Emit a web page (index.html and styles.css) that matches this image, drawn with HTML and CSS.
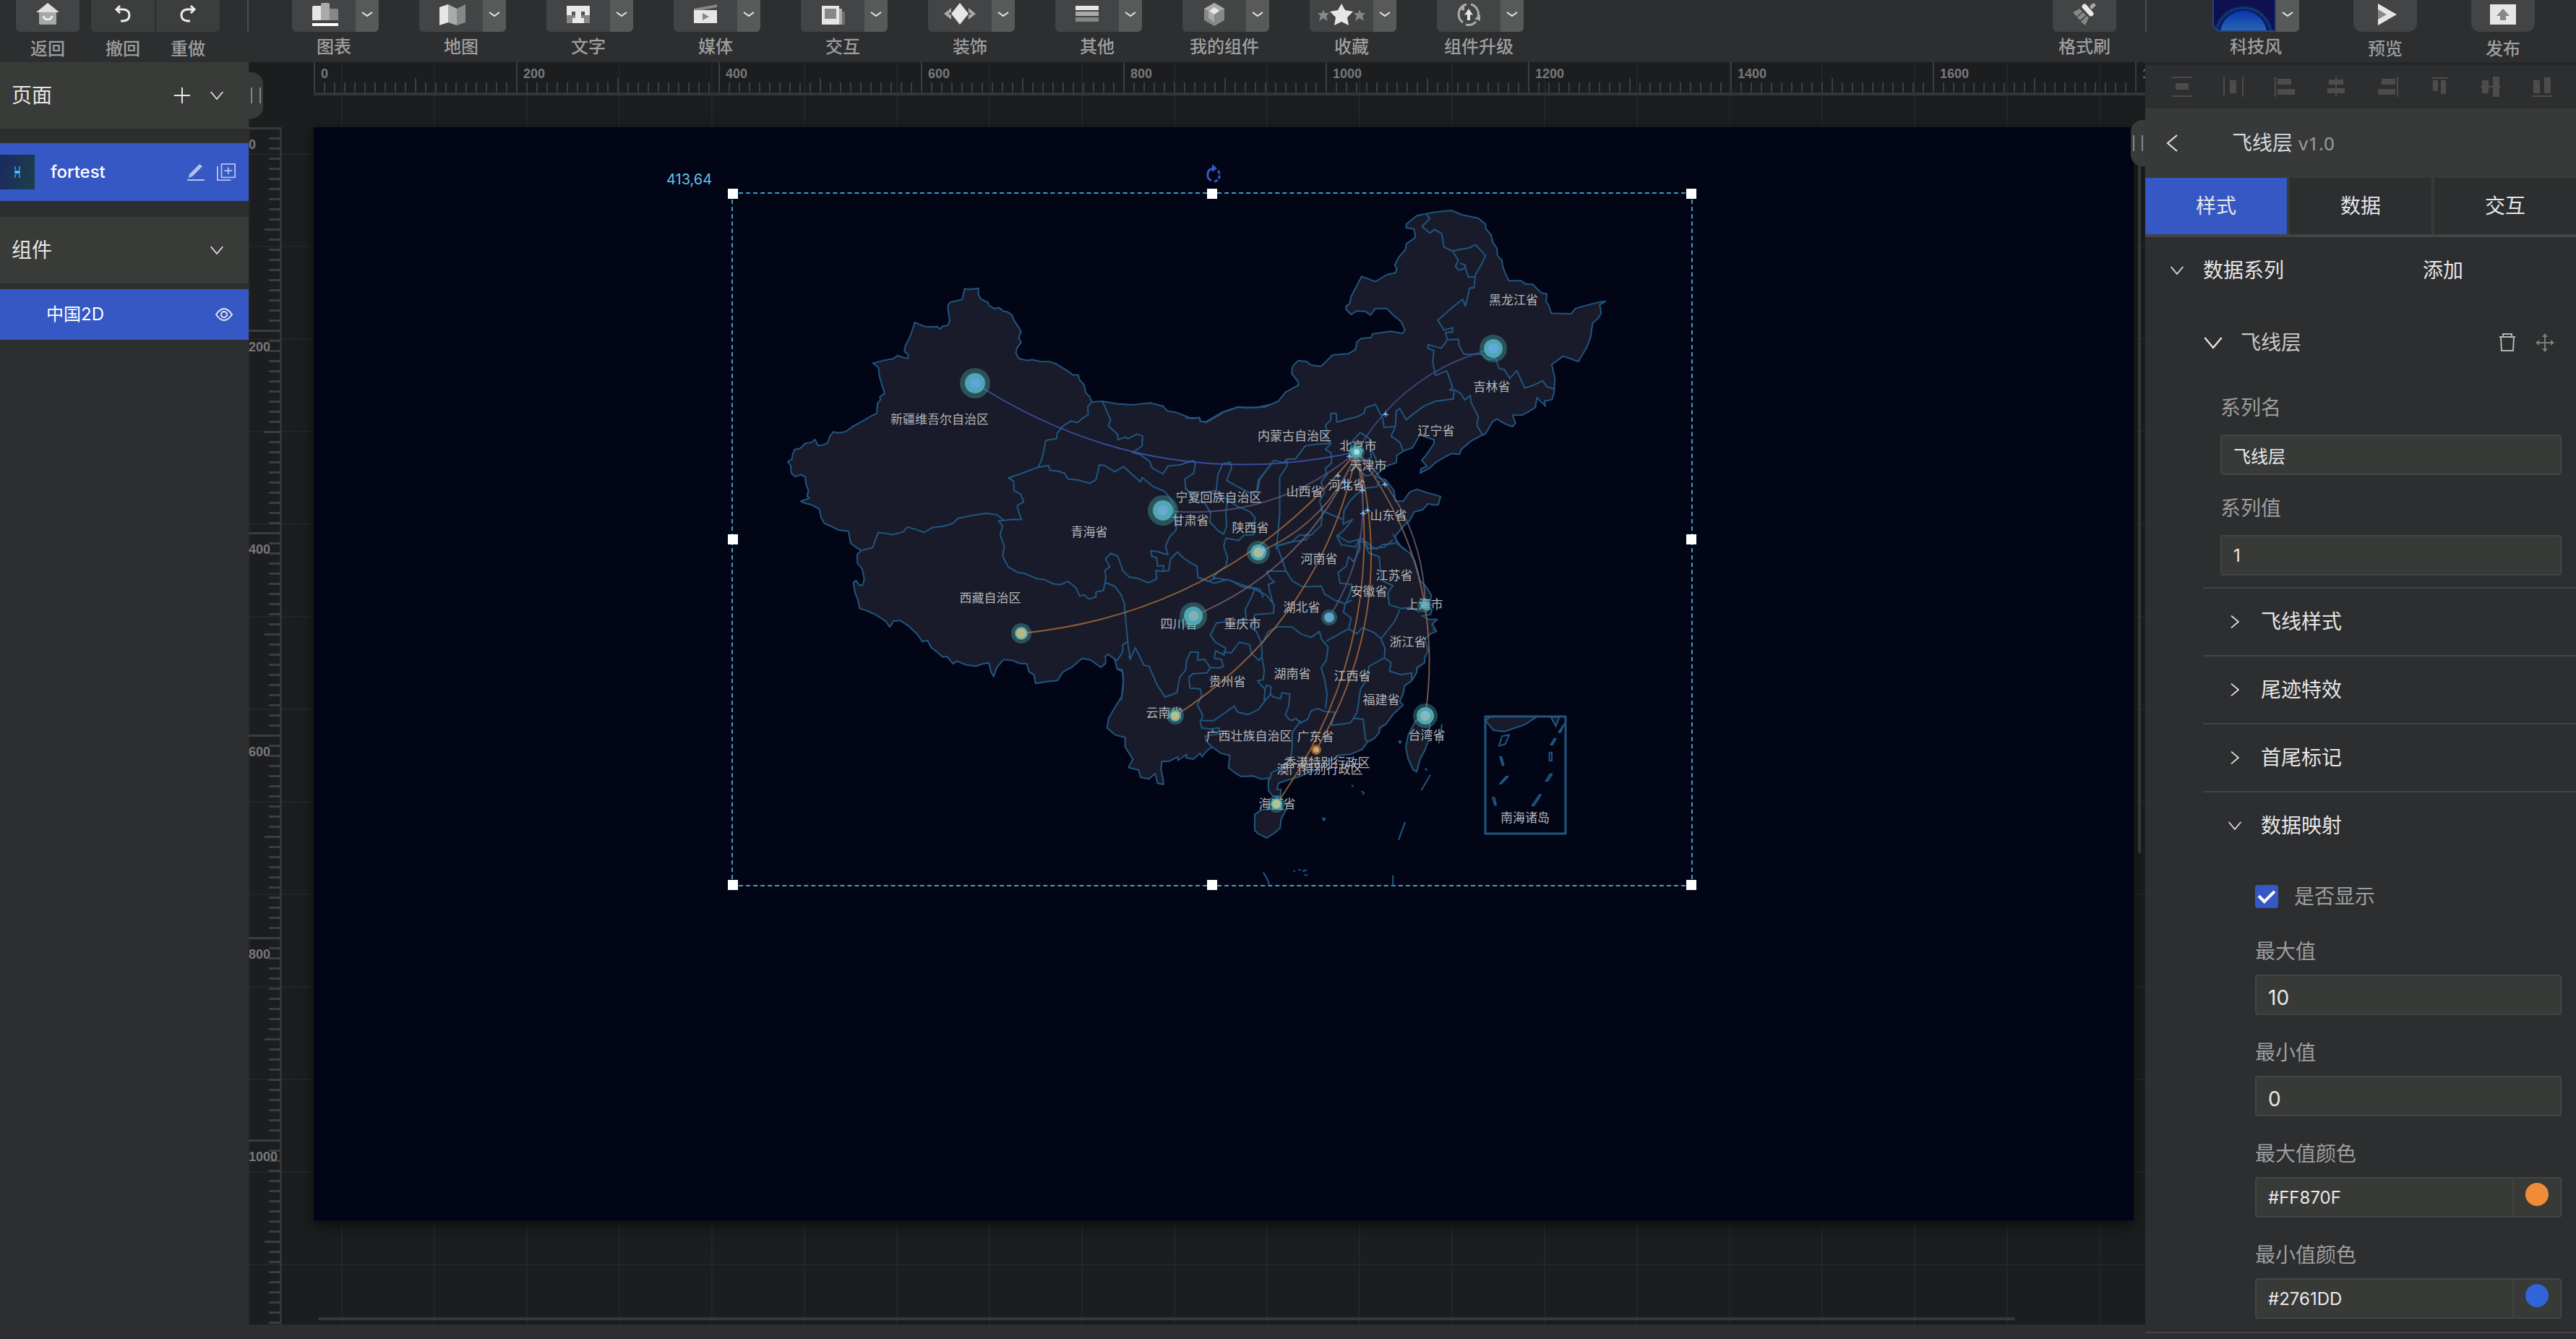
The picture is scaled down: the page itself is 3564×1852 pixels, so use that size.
FILE: index.html
```html
<!DOCTYPE html>
<html lang="zh-CN">
<head>
<meta charset="utf-8">
<title>fortest</title>
<link rel="stylesheet" href="styles.css">
</head>
<body>
<svg class="defs" aria-hidden="true">
  <symbol id="down" viewBox="0 0 24 24"><path d="M2 6L12 18L22 6"/></symbol>
  <symbol id="caret" viewBox="0 0 16 8"><path d="M1 1L8 6L15 1"/></symbol>
  <symbol id="right" viewBox="0 0 24 24"><path d="M6 2L18 12L6 22"/></symbol>
  <symbol id="plane" viewBox="-6 -6 12 12"><path d="M0-5L1-1L5 2V3L1 2L.5 4L2 5H-2L-.5 4L-1 2L-5 3V2L-1-1Z"/></symbol>
</svg>
<div class="app">
  <header class="toolbar">
    <div class="tool plain"><button class="btn" aria-label="返回"><svg viewBox="0 0 88 44"><path fill="#dedede" d="M44 4L60 17H28Z"/><path fill="#a6a7a7" d="M32 17H56V32Q56 34 54 34H34Q32 34 32 32Z"/><path class="ln" d="M38 22Q39 27 44 27T50 22"/></svg></button><span>返回</span></div>
    <div class="pair">
      <div class="tool plain"><button class="btn dim first" aria-label="撤回"><svg viewBox="0 0 88 44"><path class="ln" d="M35 13H45Q53 14 53 21T45 29H41M40 8L35 13L40 18"/></svg></button><span>撤回</span></div>
      <div class="tool plain"><button class="btn dim last" aria-label="重做"><svg viewBox="0 0 88 44"><path class="ln" d="M53 13H43Q35 14 35 21T43 29H47M48 8L53 13L48 18"/></svg></button><span>重做</span></div>
    </div>
    <i class="sep"></i>
    <div class="tools">
      <div class="tool"><div class="split"><button class="btn" aria-label="图表"><svg viewBox="0 0 88 44"><path fill="#868787" d="M52 12H62Q64 12 64 14V28H52Z"/><path fill="#a9aaaa" d="M40 6Q40 4 42 4H50Q52 4 52 6V28H40Z"/><path fill="#e6e6e6" d="M28 10Q28 8 30 8H40V28H28Z"/><path fill="#fff" d="M28 32H64V36H28Z"/></svg></button><button class="more" aria-label="更多图表"><svg><use href="#caret"/></svg></button></div><span>图表</span></div>
      <div class="tool"><div class="split"><button class="btn" aria-label="地图"><svg viewBox="0 0 88 44"><path fill="#e6e6e6" d="M28 10L40 6V31L28 35Z"/><path fill="#a9aaaa" d="M40 6L52 12V35L40 31Z"/><path fill="#868787" d="M52 12L64 6V31L52 35Z"/></svg></button><button class="more" aria-label="更多地图"><svg><use href="#caret"/></svg></button></div><span>地图</span></div>
      <div class="tool"><div class="split"><button class="btn" aria-label="文字"><svg viewBox="0 0 88 44"><path fill="#868787" d="M28 20H60V32H28Z"/><path fill="#e9e9e9" d="M28 8H60V21H28Z"/><path fill="#555657" d="M35 16H53V21H35Z"/><path fill="#e9e9e9" d="M40 14H48V25H52V32H36V25H40Z"/></svg></button><button class="more" aria-label="更多文字"><svg><use href="#caret"/></svg></button></div><span>文字</span></div>
      <div class="tool"><div class="split"><button class="btn" aria-label="媒体"><svg viewBox="0 0 88 44"><path fill="#868787" d="M28 12L60 6V10L34 15H28Z"/><path fill="#e6e6e6" d="M28 14H60V32H28Z"/><path fill="#868787" d="M40 18L49 23L40 28Z"/></svg></button><button class="more" aria-label="更多媒体"><svg><use href="#caret"/></svg></button></div><span>媒体</span></div>
      <div class="tool"><div class="split"><button class="btn" aria-label="交互"><svg viewBox="0 0 88 44"><path fill="#6d6e6f" d="M34 16H61V34H34Z"/><path fill="#a9aaaa" d="M32 12H57V34H32Z"/><path fill="#e6e6e6" d="M29 8H53V34H29Z"/><path fill="#868787" d="M33 12H49V26H33Z"/></svg></button><button class="more" aria-label="更多交互"><svg><use href="#caret"/></svg></button></div><span>交互</span></div>
      <div class="tool"><div class="split"><button class="btn" aria-label="装饰"><svg viewBox="0 0 88 44"><path fill="#a9aaaa" d="M32 11V17L28 19L32 21V27L22 19ZM56 11V17L60 19L56 21V27L66 19Z"/><path fill="#e6e6e6" d="M44 4L56 19L44 34L32 19Z"/></svg></button><button class="more" aria-label="更多装饰"><svg><use href="#caret"/></svg></button></div><span>装饰</span></div>
      <div class="tool"><div class="split"><button class="btn" aria-label="其他"><svg viewBox="0 0 88 44"><path fill="#e6e6e6" d="M28 8H60V14H28Z"/><path fill="#a9aaaa" d="M28 16H60V22H28Z"/><path fill="#868787" d="M28 24H60V30H28Z"/></svg></button><button class="more" aria-label="更多其他"><svg><use href="#caret"/></svg></button></div><span>其他</span></div>
      <div class="tool"><div class="split"><button class="btn" aria-label="我的组件"><svg viewBox="0 0 88 44"><path fill="#868787" d="M30 12L44 4L58 12V28L44 36L30 28Z"/><path fill="#a9aaaa" d="M30 12L44 4L58 12L52 15V25L44 31L36 25V15Z"/><path fill="#868787" d="M44 20L52 15V25L44 31Z"/><path fill="#e6e6e6" d="M44 10L51 15L44 20L37 15Z"/></svg></button><button class="more" aria-label="更多我的组件"><svg><use href="#caret"/></svg></button></div><span>我的组件</span></div>
      <div class="tool"><div class="split"><button class="btn" aria-label="收藏"><svg viewBox="0 0 88 44"><path fill="#868787" d="M19 13L21 18H27L23 22L25 29L19 25L13 29L15 22L11 18H17ZM69 13L71 18H77L73 22L75 29L69 25L63 29L65 22L61 18H67Z"/><path fill="#e6e6e6" d="M44 5L49 14L60 16L52 24L54 35L44 30L34 35L36 24L28 16L39 14Z"/></svg></button><button class="more" aria-label="更多收藏"><svg><use href="#caret"/></svg></button></div><span>收藏</span></div>
      <div class="tool"><div class="split"><button class="btn" aria-label="组件升级"><svg viewBox="0 0 88 44"><g fill="none" stroke="#a9aaaa" stroke-width="3"><path d="M36 31A14 14 0 0 1 41 6M47 6A14 14 0 0 1 57 23M54 30A14 14 0 0 1 40 34"/></g><path fill="#a9aaaa" d="M60 20V29L52 26ZM30 12L38 8V15Z"/><path fill="#e6e6e6" d="M44 12L50 21L46 20V28H42V20L38 21Z"/></svg></button><button class="more" aria-label="更多组件升级"><svg><use href="#caret"/></svg></button></div><span>组件升级</span></div>
    </div>
    <div class="tool brush"><button class="btn" aria-label="格式刷"><svg viewBox="0 0 88 44"><path fill="#868787" d="M28 17L37 12L41 16L33 23ZM34 24L42 17L46 21L38 28ZM39 30L47 22L50 24L45 35Z"/><path fill="#a9aaaa" d="M51 9L56 4L60 7L54 13Z"/><path stroke="#e9e9e9" stroke-width="7" stroke-linecap="round" d="M44 9L53 19"/></svg></button><span>格式刷</span></div>
    <div class="finish">
      <div class="tool theme"><div class="split"><button class="btn" aria-label="科技风"><svg viewBox="0 0 88 44"><defs><linearGradient id="glow" x2="0" y2="1"><stop stop-color="#0a35b4"/><stop offset=".45" stop-color="#2a6aae"/></linearGradient></defs><circle cx="43" cy="50" r="41" fill="#0c2560"/><circle cx="43" cy="50" r="38" fill="#0b1f66" stroke="#134078" stroke-width="2"/><circle cx="43" cy="48" r="32" fill="url(#glow)"/></svg></button><button class="more" aria-label="更多风格"><svg><use href="#caret"/></svg></button></div><span>科技风</span></div>
      <div class="tool plain"><button class="btn round" aria-label="预览"><svg viewBox="0 0 88 44"><path fill="#e6e6e6" d="M34 5L60 20L34 35Z"/><path fill="#868787" d="M34 13L46 20L34 27Z"/></svg></button><span>预览</span></div>
      <div class="tool plain"><button class="btn round" aria-label="发布"><svg viewBox="0 0 88 44"><path fill="#e6e6e6" d="M26 6H62V34H26Z"/><path fill="#868787" d="M44 12L53 22H48V28H40V22H35Z"/></svg></button><span>发布</span></div>
    </div>
  </header>

  <aside class="left">
    <div class="lhead"><b>页面</b><button aria-label="新增页面"><svg viewBox="0 0 24 24"><path d="M1 12H23M12 1V23"/></svg></button><button aria-label="折叠页面"><svg class="chev"><use href="#down"/></svg></button></div>
    <div class="page">
      <span class="thumb"><svg viewBox="0 0 48 48"><path d="M21 16V21L24 24L27 21V16M21 32V27L24 25L27 27V32" fill="none" stroke="#2e7fe0" stroke-width="2"/><path d="M20 24H28" stroke="#4ce0e6" stroke-width="2"/></svg></span>
      <span>fortest</span>
      <button aria-label="重命名"><svg viewBox="0 0 26 26"><path class="soft" d="M4 16L18 2L22 5L8 19L3 21ZM1 23H25V25H1Z"/></svg></button>
      <button aria-label="复制页面"><svg viewBox="0 0 28 26"><path class="softln" d="M7 1H27V21H7ZM17 6V16M11 11H23M1 4V25H21"/></svg></button>
    </div>
    <div class="lhead second"><b>组件</b><button aria-label="折叠组件"><svg class="chev"><use href="#down"/></svg></button></div>
    <div class="layer"><span>中国2D</span><button aria-label="显示"><svg viewBox="0 0 26 20"><path d="M2 10Q13-6 24 10Q13 26 2 10Z"/><circle cx="13" cy="10" r="4"/></svg></button></div>
  </aside>

  <main class="stage">
    <div class="hruler"><span>0</span><span>200</span><span>400</span><span>600</span><span>800</span><span>1000</span><span>1200</span><span>1400</span><span>1600</span><span>1800</span></div>
    <div class="vruler"><span>0</span><span>200</span><span>400</span><span>600</span><span>800</span><span>1000</span></div>
    <div class="board">
      <div class="coord">413,64</div>
      <svg class="rotate" viewBox="0 0 24 26"><path d="M12 6A9 9 0 0 0 10 23" fill="none" stroke-width="3"/><path d="M14 24A9 9 0 0 0 19 9" fill="none" stroke-width="3" stroke-dasharray="5 2"/><path class="tip" d="M11 0L18 6L11 11Z"/></svg>
      <div class="selection">
        <svg class="map" viewBox="1012 266 1330 960">
          <g class="land">
            <path transform="translate(1060 360) scale(.4464 .3954)" d="M1568 503L1520 515L1462 514L1420 530L1365 567L1345 563L1343 550L1320 554L1270 532L1243 527L1230 510L1190 499L1135 506L1088 502L1042 493L1009 496L1003 478L990 462L985 435L971 418L967 401L950 401L935 388L900 363L880 355L850 354L825 348L808 350L783 344L774 325L778 305L790 288L783 270L790 250L783 235L768 210L762 192L747 180L735 178L722 166L707 169L690 158L688 148L665 135L658 120L658 98L636 101L615 100L611 120L608 137L585 143L570 147L563 160L566 190L569 210L563 228L548 230L538 240L530 232L497 233L480 227L461 217L445 270L432 298L428 318L440 330L440 343L425 340L407 333L395 344L365 350L331 360L348 375L352 410L360 440L367 465L352 478L355 487L345 500L343 535L325 545L300 562L270 580L245 600L225 604L208 600L198 615L190 640L175 646L160 648L152 627L140 637L122 640L105 658L88 662L82 680L80 695L67 705L76 718L78 745L90 757L105 750L121 757L124 785L131 805L127 825L134 832L107 843L120 850L140 855L165 870L170 900L180 920L200 930L225 944L255 948L262 990L280 1005L295 1015L282 1030L283 1060L298 1080L304 1115L300 1135L290 1138L278 1120L270 1128L276 1165L285 1190L290 1218L310 1225L340 1240L370 1262L383 1283L395 1262L415 1260L440 1278L470 1310L484 1334L500 1330L512 1355L530 1370L547 1388L560 1386L580 1412L590 1402L620 1415L650 1420L670 1412L690 1408L697 1440L705 1456L715 1425L735 1397L765 1400L785 1410L808 1412L815 1440L830 1450L835 1480L870 1474L903 1470L920 1440L945 1425L980 1392L1005 1398L1037 1424L1052 1410L1052 1385L1060 1378L1080 1395L1088 1430L1105 1440L1107 1490L1100 1540L1081 1568H1568Z"/>
            <path transform="translate(1640 260) scale(.3954 .3333)" d="M0 955L50 953L53 968L72 970L130 930L185 908L210 913L280 908L325 885L350 848L395 818L395 805L372 770L375 740L395 716L425 720L440 735L475 740L515 693L570 688L595 670L600 640L615 625L650 620L655 605L720 595L760 604L768 590L755 555L725 525L705 500L665 500L648 527L630 512L600 510L580 525L563 505L562 490L575 480L580 450L617 367L665 388L705 360L735 352L740 335L733 320L745 290L770 255L773 232L805 205L800 170L773 165L773 150L810 115L875 100L930 93L970 112L1025 125L1050 150L1052 170L1070 195L1090 250L1092 280L1108 300L1120 355L1132 385L1175 385L1215 400L1245 435L1265 440L1262 470L1280 520L1350 522L1365 500L1400 488L1450 473L1470 470L1450 485L1455 520L1445 540L1425 560L1418 620L1405 660L1375 720L1322 698L1282 733L1293 790L1290 850L1283 878L1255 885L1230 870L1225 910L1205 925L1180 942L1145 943L1155 975L1145 990L1120 980L1090 958L1075 970L1050 1020L1035 1028L1000 1050L965 1085L960 1105L930 1102L880 1135L855 1162L822 1183L825 1165L845 1155L827 1130L845 1105L870 1060L870 1045L820 1025L795 1078L765 1090L740 1110L738 1140L700 1155L665 1195L680 1205L700 1210L730 1255L735 1300L762 1300L785 1262L810 1250L840 1262L893 1280L885 1315L865 1315L850 1310L830 1335L800 1345L785 1380L765 1400L735 1445L740 1475L770 1500H0Z"/>
            <path transform="translate(1500 740) scale(.4719 .3333)" d="M895 -15L915 20L930 50L955 75L970 110L978 150L985 190L1000 210L1018 250L1015 270L985 280L1020 310L1015 330L990 335L1010 350L1035 350L1020 370L1033 400L1015 410L1000 430L1008 480L998 530L975 570L960 605L940 625L935 660L925 690L930 710L905 745L885 785L865 820L850 845L830 860L815 890L780 910L740 925L700 945L660 985L625 1005L590 1020L570 1030L565 1055L577 1055L575 1085L555 1085L540 1060L540 1020L545 1008L520 1013L495 1000L460 1002L440 985L423 965L427 915L400 905L375 880L360 895L345 920L340 905L320 930L300 925L275 920L250 938L228 940L225 970L230 1005L233 1035L215 1030L208 990L190 1012L165 1005L160 975L130 965L143 930L120 880L120 840L92 830L67 800L72 760L88 720L110 670L115 600L112 560L100 555L93 510L150 400V-15Z"/>
            <path class="edge" transform="translate(1500 740) scale(.4719 .3333)" d="M500 1160L520 1140L560 1135L592 1140L577 1180L575 1215L555 1240L535 1257L510 1240L500 1225ZM1015 760L1010 850L998 895L985 930L975 982L965 975L950 930L943 880L950 830L970 775L985 755ZM1177 770L1192 752H1330L1290 788L1232 815L1200 810ZM1368 755H1393L1383 793Z"/>
          </g>
          <g class="border">
            <g transform="translate(1060 360) scale(.4464 .3954)">
              <path d="M1568 503L1520 515L1462 514L1420 530L1365 567L1345 563L1343 550L1320 554L1270 532L1243 527L1230 510L1190 499L1135 506L1088 502L1042 493L1009 496L1003 478L990 462L985 435L971 418L967 401L950 401L935 388L900 363L880 355L850 354L825 348L808 350L783 344L774 325L778 305L790 288L783 270L790 250L783 235L768 210L762 192L747 180L735 178L722 166L707 169L690 158L688 148L665 135L658 120L658 98L636 101L615 100L611 120L608 137L585 143L570 147L563 160L566 190L569 210L563 228L548 230L538 240L530 232L497 233L480 227L461 217L445 270L432 298L428 318L440 330L440 343L425 340L407 333L395 344L365 350L331 360L348 375L352 410L360 440L367 465L352 478L355 487L345 500L343 535L325 545L300 562L270 580L245 600L225 604L208 600L198 615L190 640L175 646L160 648L152 627L140 637L122 640L105 658L88 662L82 680L80 695L67 705L76 718L78 745L90 757L105 750L121 757L124 785L131 805L127 825L134 832L107 843L120 850L140 855L165 870L170 900L180 920L200 930L225 944L255 948L262 990L280 1005L295 1015L282 1030L283 1060L298 1080L304 1115L300 1135L290 1138L278 1120L270 1128L276 1165L285 1190L290 1218L310 1225L340 1240L370 1262L383 1283L395 1262L415 1260L440 1278L470 1310L484 1334L500 1330L512 1355L530 1370L547 1388L560 1386L580 1412L590 1402L620 1415L650 1420L670 1412L690 1408L697 1440L705 1456L715 1425L735 1397L765 1400L785 1410L808 1412L815 1440L830 1450L835 1480L870 1474L903 1470L920 1440L945 1425L980 1392L1005 1398L1037 1424L1052 1410L1052 1385L1060 1378L1080 1395L1088 1430L1105 1440L1107 1490L1100 1540"/>
              <path d="M1009 496L997 512L998 540L980 553L965 568L945 562L920 580L902 605L900 624L867 630L860 670L853 700L843 724L800 742L751 762L767 772L768 805L790 820L798 845L778 858L783 880L791 907L765 906L737 910L715 890L683 885L640 892L594 903L580 920L550 930L515 935L490 952L460 940L437 933L425 950L390 960L370 955L347 952L330 1005L295 1015"/>
              <path d="M737 910L721 912L733 930L725 960L738 1000L733 1035L750 1072L780 1092L800 1095L840 1114L865 1118L890 1132L912 1135L935 1123L960 1145L972 1175L985 1170L1000 1185L1022 1178L1022 1160L1045 1155L1050 1130L1053 1110L1050 1085L1065 1072L1052 1045L1068 1025L1090 1035L1105 1085L1125 1108L1150 1112L1185 1128L1210 1115L1208 1085L1230 1088L1248 1085L1253 1045L1275 1020L1290 1038L1310 1055L1335 1070L1338 1110L1370 1123L1395 1110"/>
              <path d="M843 724L875 718L880 735L905 738L925 745L935 765L965 768L1003 780L1022 768L1033 715L1050 718L1080 740L1108 722L1135 750L1160 775L1165 760L1200 792L1235 808L1250 830L1265 860L1262 880L1275 905L1270 945L1250 968L1238 1000L1245 1030L1215 1020L1192 1016L1195 1035L1210 1040L1213 1070L1232 1068L1230 1088"/>
              <path d="M1053 1128L1080 1140L1100 1170L1110 1200L1117 1290L1122 1350L1130 1398M1118 1335L1105 1345L1105 1370L1088 1400L1080 1395"/>
              <path d="M1042 493L1068 560L1060 578L1090 610L1090 628L1115 618L1120 625L1150 608L1167 615L1165 650L1135 673L1160 680L1190 705L1195 725L1230 748L1245 720L1285 715L1325 700L1330 715L1325 745L1298 765L1300 800L1330 825L1350 815L1395 805L1400 750L1415 712L1438 706L1443 725L1427 770L1450 785L1495 812L1520 808L1525 770L1568 710"/>
              <path d="M1300 795L1320 830L1360 850L1378 885L1375 915L1400 945L1418 958L1427 930L1425 880L1430 840L1395 805M1430 840L1460 860L1500 880L1515 900L1510 960L1480 962L1465 980L1425 972L1418 1000L1430 1040L1425 1070L1400 1090L1385 1110L1440 1120L1470 1140L1500 1148"/>
            </g>
            <g transform="translate(1640 260) scale(.3954 .3333)">
              <path d="M0 955L50 953L53 968L72 970L130 930L185 908L210 913L280 908L325 885L350 848L395 818L395 805L372 770L375 740L395 716L425 720L440 735L475 740L515 693L570 688L595 670L600 640L615 625L650 620L655 605L720 595L760 604L768 590L755 555L725 525L705 500L665 500L648 527L630 512L600 510L580 525L563 505L562 490L575 480L580 450L617 367L665 388L705 360L735 352L740 335L733 320L745 290L770 255L773 232L805 205L800 170L773 165L773 150L810 115L875 100L930 93L970 112L1025 125L1050 150L1052 170L1070 195L1075 225L1090 250L1092 280L1108 300L1110 325L1120 355L1132 385L1175 385L1190 400L1215 400L1245 435L1265 440L1262 470L1272 490L1280 520L1350 522L1365 500L1400 488L1450 473L1470 470L1450 485L1455 520L1445 540L1425 560L1418 620L1405 660L1375 720L1322 698L1282 733L1293 790L1290 850L1283 878L1255 885L1260 905L1230 870L1225 910L1205 925L1180 942L1145 943L1155 975L1145 990L1120 980L1090 958L1075 970L1050 1020L1035 1028L1000 1050L965 1085L960 1105L930 1102L880 1135L855 1162L822 1183L825 1165L845 1155L827 1130L845 1105L870 1060L870 1045L820 1025L795 1078L765 1090L740 1110L738 1140L700 1155L665 1195L680 1205L700 1210L730 1255L735 1300L762 1300L785 1262L810 1250L840 1262L893 1280L885 1315L865 1315L850 1310L830 1335L800 1345L785 1380L765 1400L735 1445L740 1475L770 1500"/>
              <path d="M845 110L855 128L828 160L855 187L872 172L897 190L905 245L935 262L960 255L990 250L1015 235L1050 280L1035 320L1015 360L1010 415L995 415L980 490L970 462L930 500L883 548L905 590L935 580L935 598L910 600L917 630L955 628L960 660L975 690L1040 690L1060 712L1085 705L1098 750L1115 752L1135 790L1160 758L1187 830L1215 820L1250 800L1265 825L1293 835M935 262L955 300L945 325L955 340L975 335L980 320L960 312M980 330L990 370L1012 370"/>
              <path d="M917 630L895 665L850 650L848 665L870 675L865 720L875 778L915 758L935 830L925 838L940 840L938 875L875 885L835 905L800 935L773 962L750 915L738 925L735 990L695 993L690 955L665 898L630 912L625 935L600 950L570 958L530 972L528 935L510 935L508 965L490 985L495 1005L490 1040L510 1060L465 1063L420 1070L385 1125L355 1125L345 1140L310 1130L285 1170L260 1210L255 1250L240 1262M940 835L965 855L978 880L997 860L1000 890L1025 950L1020 985L1040 1025M735 990L720 1030L750 1055L762 1090"/>
              <path d="M585 1050L600 1030L612 1015L650 1045L648 1080L650 1120L620 1135L590 1120L575 1090ZM650 1080L665 1120L672 1150L650 1190L630 1195L610 1170L600 1135M510 1060L490 1085L510 1100L512 1140L490 1165L495 1190L475 1220L487 1265L470 1300L480 1340L475 1400L440 1440L400 1440L370 1470L320 1487M355 1125L355 1155L330 1200L330 1350L325 1420L318 1500M680 1215L670 1240L630 1245L600 1270L575 1300L555 1340L552 1395L585 1375L555 1420L530 1445L545 1480L595 1490L605 1465L630 1470L640 1495L670 1498L690 1480L735 1475M470 1335L500 1350L550 1375"/>
            </g>
            <g transform="translate(1500 740) scale(.4719 .3333)">
              <path d="M905 -5L915 20L930 50L955 75L970 110L978 150L985 190L1000 210L1018 250L1015 270L985 280L1020 310L1015 330L990 335L1010 350L1035 350L1020 370L1033 400L1015 410L1000 430L1008 480L998 510L998 530L975 550L975 570L960 605L940 625L935 660L925 690L935 705L905 745L885 785L865 800L865 820L850 845L830 860L815 890L780 910L740 915L735 930L700 945L690 970L660 985L625 1005L590 1020L570 1030L565 1055L577 1055L575 1085L555 1085L540 1060L540 1020L545 1008L520 1013L495 1000L460 1002L440 985L423 965L427 915L400 905L375 880L360 895L345 920L340 905L320 930L300 925L300 910L275 935L275 920L250 938L228 940L225 970L230 1005L233 1035L215 1030L208 990L190 1012L165 1005L160 975L130 965L143 930L120 880L120 840L92 830L67 800L72 760L88 720L110 670L115 600L112 560L100 555"/>
              <path d="M130 500L135 515L150 468L165 510L175 540L190 545L215 625L237 672L272 655L280 590L298 560L300 520L312 485L335 487L332 520L352 515L370 550L395 552L408 545L402 515L382 512L385 480L410 498L410 485L430 490L455 445L485 455L490 490L512 520L523 505M370 550L360 572L320 575L307 590L310 635L340 638L345 665L332 705L348 750L340 778L345 800L370 805L395 800L395 825L355 835L358 855L375 880"/>
              <path d="M410 498L415 470L385 445L370 415L388 365L415 360L430 375L475 345L472 310L490 260L500 225L535 250L557 290L555 325L500 330L490 385L505 400L520 450L522 515M485 215L515 225L525 260M535 150L545 180L558 195L540 205L545 240L555 290M335 175L380 200L420 185L460 205L500 225"/>
              <path d="M565 45L580 100L592 150L535 150M592 150L610 190L640 215L695 212L705 245L735 270L765 285L785 270M565 45L600 30L650 20L660 5M810 0L808 60L790 110L775 90L768 130L745 155L750 200L785 205L780 240L765 290L760 320L783 345L775 390L710 440M820 30L835 75L865 90L868 140L875 190L905 210L890 240L895 290L930 305L955 300L985 320M740 0L775 30L815 15L850 55L880 50L905 20"/>
              <path d="M925 310L910 360L870 430L850 405L815 385L800 410L775 390M522 450L540 400L570 380L610 382L635 410L665 425L690 400L695 430L715 465L710 520L695 550L705 600L712 660L708 720M522 515L528 560L525 600L508 605L530 640L528 690L548 660L552 670L575 680L580 655L603 660L600 710L590 745L600 765L610 770L620 760M530 640L535 622L548 630L545 665"/>
              <path d="M345 770L380 770L400 750L440 710L450 735L480 745L510 725L530 690M620 760L635 780L655 765L665 730L685 720L705 732L735 735L725 790L780 780L790 760L818 765L825 850L835 858M635 770L610 820L610 880L605 930L580 965L550 985L545 1008M790 760L800 735L805 690L810 640L832 590L835 545L880 510M870 430L882 470L880 510L900 530L895 565L930 580L960 572L960 600"/>
              <path d="M1015 995L988 1060M941 1190L922 1265M905 1412V1455M525 1400Q540 1430 543 1455M1049 785L1040 865M923 855L929 856L926 865ZM1000 968L1005 978M784 1038L789 1045M812 1064Q826 1068 816 1077M699 1176H706L703 1185ZM614 1398L618 1393M627 1388L635 1391M640 1396L652 1390M645 1410L655 1412M1018 370L1024 375M1022 395L1030 385"/>
              <path d="M1225 835L1246 829L1234 868L1216 875ZM1219 920L1224 922L1230 955L1226 955ZM1237 1002L1243 1002L1224 1030L1218 1033ZM1197 1090H1203L1208 1120H1204ZM1407 785L1397 818L1391 818ZM1378 845H1383L1373 870H1368ZM1364 902H1371V937H1364ZM1366 992H1372L1359 1021H1353ZM1335 1078H1339L1319 1123H1313ZM1268 1185L1285 1172"/>
            </g>
            <rect class="thick" x="2055" y="991" width="111" height="162"/>
          </g>
          <g class="fly">
            <path stroke="#3f56b4" d="M1349 530Q1593 687 1877 625"/><path stroke="#484a86" d="M2066 482Q1941 514 1877 625"/><path stroke="#5b557d" d="M1609 706Q1760 722 1877 625"/>
            <path stroke="#8f6a50" d="M1741 764Q1838 723 1877 625"/><path stroke="#75636f" d="M1651 852Q1812 785 1877 625"/><path stroke="#a86b3a" d="M1413 876Q1698 847 1877 625M1626 990Q1828 860 1877 625M1821 1037Q1936 843 1877 625M1766 1112Q1923 891 1877 625"/>
            <path stroke="#575584" d="M1839 854Q1906 747 1877 625"/><path stroke="#8c6a5c" d="M1972 990Q2001 787 1877 625"/><path stroke="#686078" d="M1972 836Q1968 710 1877 625"/>
          </g>
          <g class="names">
            <text x="2094" y="421">黑龙江省</text><text x="2064" y="541">吉林省</text><text x="1987" y="602">辽宁省</text><text x="1791" y="609">内蒙古自治区</text><text x="1300" y="586">新疆维吾尔自治区</text><text x="1879" y="623">北京市</text><text x="1893" y="650">天津市</text><text x="1863" y="677">河北省</text><text x="1805" y="686">山西省</text><text x="1921" y="719">山东省</text><text x="1686" y="694">宁夏回族自治区</text><text x="1647" y="726">甘肃省</text><text x="1730" y="736">陕西省</text><text x="1507" y="742">青海省</text><text x="1370" y="833">西藏自治区</text><text x="1825" y="779">河南省</text><text x="1929" y="802">江苏省</text><text x="1894" y="824">安徽省</text><text x="1971" y="842">上海市</text><text x="1801" y="846">湖北省</text><text x="1631" y="869">四川省</text><text x="1719" y="869">重庆市</text><text x="1948" y="894">浙江省</text><text x="1698" y="949">贵州省</text><text x="1788" y="938">湖南省</text><text x="1871" y="941">江西省</text><text x="1911" y="974">福建省</text><text x="1611" y="992">云南省</text><text x="1728" y="1024">广西壮族自治区</text><text x="1820" y="1025">广东省</text><text x="1974" y="1023">台湾省</text><text x="1836" y="1061">香港特别行政区</text><text x="1826" y="1070">澳门特别行政区</text><text x="1767" y="1118">海南省</text><text x="2110" y="1137">南海诸岛</text>
          </g>
          <g class="halo"><circle cx="1349" cy="530" r="21"/><circle cx="2066" cy="482" r="19"/><circle cx="1609" cy="706" r="21"/><circle cx="1651" cy="852" r="19"/><circle cx="1741" cy="764" r="16"/><circle cx="1413" cy="876" r="14"/><circle cx="1972" cy="990" r="17"/><circle cx="1626" cy="990" r="12"/><circle cx="1766" cy="1112" r="12"/><circle cx="1839" cy="854" r="11"/><circle cx="1971" cy="837" r="10"/><circle cx="1877" cy="625" r="11"/></g>
          <g class="dot"><circle cx="1349" cy="530" r="14"/><circle cx="2066" cy="482" r="13"/><circle cx="1609" cy="706" r="14"/><circle cx="1651" cy="852" r="13"/><circle cx="1741" cy="764" r="11"/><circle cx="1413" cy="876" r="9"/><circle cx="1972" cy="990" r="12"/><circle cx="1626" cy="990" r="8"/><circle cx="1766" cy="1112" r="8"/><circle cx="1839" cy="854" r="7"/><circle cx="1971" cy="837" r="6"/><circle cx="1877" cy="625" r="8"/></g>
          <g><circle cx="1349" cy="530" r="7" fill="#5ca4e0"/><circle cx="2066" cy="482" r="7" fill="#62a8dc"/><circle cx="1609" cy="706" r="7" fill="#6aaad2"/><circle cx="1651" cy="852" r="7" fill="#7fb0b6"/><circle cx="1741" cy="764" r="7" fill="#a8bd9a"/><circle cx="1413" cy="876" r="7" fill="#b6b886"/><circle cx="1972" cy="990" r="7" fill="#86b8b4"/><circle cx="1626" cy="990" r="6" fill="#b9bd86"/><circle cx="1766" cy="1112" r="6" fill="#b5c38c"/><circle cx="1839" cy="854" r="6" fill="#64a0d0"/><circle cx="1971" cy="837" r="4" fill="#74a8bc"/><circle cx="1877" cy="625" r="4" fill="#9fe0d8"/><circle cx="1821" cy="1037" r="7" fill="#8f5f3c"/><circle cx="1821" cy="1037" r="4" fill="#d0a468"/></g>
          <g class="planes"><use href="#plane" x="1912" y="567" width="10" height="10"/><use href="#plane" x="1846" y="652" width="10" height="10"/><use href="#plane" x="1862" y="625" width="10" height="10"/><use href="#plane" x="1855" y="661" width="10" height="10"/><use href="#plane" x="1860" y="667" width="10" height="10"/><use href="#plane" x="1880" y="672" width="10" height="10"/><use href="#plane" x="1887" y="700" width="10" height="10"/><use href="#plane" x="1881" y="704" width="10" height="10"/><use href="#plane" x="1911" y="664" width="10" height="10"/><use href="#plane" x="1743" y="755" width="10" height="10"/><use href="#plane" x="1967" y="981" width="10" height="10"/></g>
        </svg>
        <i class="h tl"></i><i class="h tc"></i><i class="h tr"></i><i class="h ml"></i><i class="h mr"></i><i class="h bl"></i><i class="h bc"></i><i class="h br"></i>
      </div>
    </div>
    <i class="vbar"></i><i class="hbar"></i>
    <button class="grip gl" aria-label="收起左侧"></button>
    <button class="grip gr" aria-label="收起右侧"></button>
  </main>

  <aside class="right">
    <div class="aligns">
      <button aria-label="垂直分布"><svg viewBox="0 0 28 28"><path d="M0 0H28V2H0ZM5 9H23V18H5ZM0 26H28V28H0Z"/></svg></button>
      <button aria-label="水平分布"><svg viewBox="0 0 28 28"><path d="M0 0H2V28H0ZM9 5H18V23H9ZM26 0H28V28H26Z"/></svg></button>
      <button aria-label="左对齐"><svg viewBox="0 0 28 28"><path d="M0 0H2V28H0ZM4 3H23V11H4ZM4 17H28V25H4Z"/></svg></button>
      <button aria-label="水平居中"><svg viewBox="0 0 28 28"><path d="M13 0H15V28H13ZM4 4H24V11H4ZM2 16H26V23H2Z"/></svg></button>
      <button aria-label="右对齐"><svg viewBox="0 0 28 28"><path d="M26 0H28V28H26ZM5 3H24V11H5ZM0 17H24V25H0Z"/></svg></button>
      <button aria-label="上对齐"><svg viewBox="0 0 28 28"><path d="M3 1H25V3H3ZM5 5H12V20H5ZM16 5H23V24H16Z"/></svg></button>
      <button aria-label="垂直居中"><svg viewBox="0 0 28 28"><path d="M0 13H28V15H0ZM2 5H11V23H2ZM17 0H26V28H17Z"/></svg></button>
      <button aria-label="下对齐"><svg viewBox="0 0 28 28"><path d="M0 26H28V28H0ZM2 5H11V23H2ZM17 1H26V23H17Z"/></svg></button>
    </div>
    <div class="title"><button aria-label="后退"><svg viewBox="0 0 16 24"><path d="M15 1L2 12L15 23"/></svg></button><h2>飞线层</h2><small>v1.0</small></div>
    <nav class="tabs"><button class="on">样式</button><button>数据</button><button>交互</button></nav>
    <div class="row series"><svg><use href="#down"/></svg><span>数据系列</span><button>添加</button></div>
    <div class="row item"><svg><use href="#down"/></svg><span>飞线层</span>
      <button aria-label="删除"><svg viewBox="0 0 24 26"><path d="M1 5H23M6 5V1H18V5M3 5L4 24H20L21 5"/></svg></button>
      <button class="mv" aria-label="移动"><svg viewBox="0 0 26 26"><path d="M13 2V24M2 13H24"/><path class="f" d="M13 0L17 5H9ZM13 26L17 21H9ZM0 13L5 9V17ZM26 13L21 9V17Z"/></svg></button>
    </div>
    <div class="fields outer">
      <div class="field"><label for="sn">系列名</label><input id="sn" value="飞线层"></div>
      <div class="field"><label for="sv">系列值</label><input id="sv" value="1"></div>
    </div>
    <div class="groups">
      <div class="row sub"><svg><use href="#right"/></svg><span>飞线样式</span></div>
      <div class="row sub"><svg><use href="#right"/></svg><span>尾迹特效</span></div>
      <div class="row sub"><svg><use href="#right"/></svg><span>首尾标记</span></div>
      <div class="row sub"><svg><use href="#down"/></svg><span>数据映射</span></div>
    </div>
    <div class="fields inner">
      <label class="check"><input type="checkbox" checked><span>是否显示</span></label>
      <div class="field"><label for="mx">最大值</label><input id="mx" class="num" value="10"></div>
      <div class="field"><label for="mn">最小值</label><input id="mn" class="num" value="0"></div>
      <div class="field"><label for="mxc">最大值颜色</label><div class="color"><input id="mxc" value="#FF870F"><button aria-label="选择最大值颜色"><i class="orange"></i></button></div></div>
      <div class="field"><label for="mnc">最小值颜色</label><div class="color"><input id="mnc" value="#2761DD"><button aria-label="选择最小值颜色"><i class="blue"></i></button></div></div>
    </div>
  </aside>
</div>
</body>
</html>
```

FILE: styles.css
```css
* { box-sizing: border-box; }
body { margin: 0; background: #2d2e30; color: #e6e6e6; font: 28px/40px Inter, "Noto Sans CJK SC", sans-serif; }
button { margin: 0; padding: 0; border: 0; background: none; color: inherit; font: inherit; display: flex; align-items: center; justify-content: center; }
svg { display: block; }
i { display: block; }
.defs { position: absolute; width: 0; height: 0; }

.app { display: grid; grid-template: 86px 1fr 20px / 344px 1fr 596px; min-height: 100vh; }

/* toolbar */
.toolbar { grid-column: 1 / -1; display: flex; align-items: flex-start; padding-left: 22px; background: #2d2e30; }
.tool { display: flex; flex-direction: column; align-items: center; gap: 9px; flex: none; font-size: 24px; font-weight: 500; line-height: 24px; color: #9d9e9e; white-space: nowrap; }
.plain { gap: 12px; }
.btn { width: 88px; height: 44px; background: #434446; border-radius: 0 0 6px 6px; overflow: hidden; }
.btn svg { width: 88px; height: 44px; flex: none; }
.ln { fill: none; stroke: #ececec; stroke-width: 3; }
.pair { display: flex; gap: 2px; margin-left: 16px; }
.dim { background: #3c3e3d; }
.first { border-radius: 0 0 0 6px; }
.last { border-radius: 0 0 6px 0; }
.round { border-radius: 0 0 12px 12px; }
.sep { width: 2px; height: 44px; margin-left: 38px; background: #4b4c4d; }
.tools { display: flex; gap: 56px; margin-left: 60px; }
.tools .tool > span { margin-right: 4px; }
.split { display: flex; }
.split .btn { border-radius: 0 0 0 6px; }
.more { width: 32px; height: 44px; background: #585a59; border-radius: 0 0 6px 0; }
.more svg { width: 16px; height: 8px; margin-top: -4px; }
.more svg, .chev, .row svg, .lhead svg, .layer svg, .title svg { fill: none; stroke: #e6e6e6; stroke-width: 2; }
.brush { margin-left: auto; margin-right: 40px; }
.finish { display: flex; justify-content: space-between; flex: none; width: 596px; padding: 0 57px 0 93px; background: linear-gradient(#4b4c4d, #4b4c4d) 0 0 / 2px 44px no-repeat; }
.theme .btn { border: solid #27418f; border-width: 0 2px 2px; border-radius: 0 0 0 12px; background: #0e1050; }

/* left column */
.left { grid-column: 1; grid-row: 2 / -1; }
.lhead { display: flex; align-items: center; gap: 26px; height: 94px; padding: 0 34px 0 16px; background: #393b39; border-bottom: 2px solid #2a2b2c; }
.lhead b { font-weight: 400; margin-right: auto; }
.lhead svg { width: 24px; height: 24px; }
.lhead .chev { width: 20px; height: 20px; }
.second { margin-top: 22px; }
.page { display: flex; align-items: center; height: 80px; margin-top: 18px; padding-right: 18px; background: #3558c4; color: #fff; font-size: 24px; font-weight: 500; }
.page > span:nth-child(2) { flex: 1; padding-left: 22px; }
.page button + button { margin-left: 16px; }
.page button svg { width: 26px; height: 26px; }
.thumb { width: 48px; height: 48px; background: linear-gradient(100deg, #1b2a5e, #1c3f4c); }
.soft { fill: #b5c1ea; }
.softln { fill: none; stroke: #b5c1ea; stroke-width: 2; }
.layer { display: flex; align-items: center; justify-content: space-between; height: 70px; margin-top: 6px; padding: 0 21px 0 64px; background: #3558c4; color: #fff; font-size: 24px; }
.layer svg { width: 26px; height: 20px; }

/* canvas */
.stage { position: relative; overflow: hidden; min-width: 0; background: linear-gradient(90deg, #242527 2px, transparent 2px) 0 0 / 128px 128px, linear-gradient(#242527 2px, transparent 2px) 0 -2px / 128px 128px, #1c1d1f; padding: 90px 16px 0 90px; }
.board { position: relative; height: 1512px; background: #020516; box-shadow: 0 6px 18px #0009; }
.hruler, .vruler { position: absolute; display: flex; color: #77787a; font: bold 18px/20px "Liberation Sans", sans-serif; overflow: hidden; }
.hruler { left: 90px; right: 0; top: 0; height: 46px; border-bottom: 4px solid #343537;
  background: linear-gradient(90deg, #3c3d3f 2px, transparent 2px) 0 0 / 280px 42px, linear-gradient(90deg, #3c3d3f 2px, transparent 2px) 0 22px / 140px 20px repeat-x, linear-gradient(90deg, #3c3d3f 2px, transparent 2px) 0 28px / 14px 14px repeat-x; }
.hruler span { flex: none; width: 280px; padding: 6px 0 0 10px; }
.vruler { left: 0; top: 90px; bottom: 0; width: 46px; flex-direction: column; border-right: 3px solid #343537; border-top: 2px solid #343537;
  background: linear-gradient(#3c3d3f 3px, transparent 3px) 0 -2px / 46px 280px repeat, linear-gradient(#3c3d3f 3px, transparent 3px) 22px -2px / 21px 140px repeat-y, linear-gradient(#3c3d3f 3px, transparent 3px) 28px -2px / 15px 14px repeat-y; }
.vruler span { flex: none; height: 280px; padding-top: 12px; }
.coord { position: absolute; left: 488px; top: 60px; font-size: 20px; line-height: 24px; color: #5cc4ea; }
.rotate { position: absolute; left: 1232px; top: 51px; width: 24px; height: 26px; stroke: #3558c4; }
.rotate .tip { fill: #3558c4; stroke: none; }
.selection { position: absolute; left: 578px; top: 90px; width: 1330px; height: 960px; border: 2px dashed #3f9dc0; }
.map { position: absolute; left: -2px; top: -2px; width: 1330px; height: 960px; }
.land { fill: #191b2a; }
.edge { stroke: #205680; stroke-width: 2; vector-effect: non-scaling-stroke; }
.border { fill: none; stroke: #205680; stroke-width: 2; stroke-linejoin: round; }
.border path { vector-effect: non-scaling-stroke; stroke-width: 2; }
.thick { stroke-width: 3; }
.fly { fill: none; stroke-width: 2; opacity: .8; }
.names { fill: #b4b5ba; font-size: 17px; text-anchor: middle; }
.halo { fill: #4fb8b4; opacity: .35; }
.dot { fill: #50a6b2; }
.planes { fill: #79bdf5; }
.h { position: absolute; width: 14px; height: 14px; background: #fff; transform: translate(-50%, -50%); }
.tl, .tc, .tr { top: 0; }
.ml, .mr { top: 50%; }
.bl, .bc, .br { top: 100%; }
.tl, .ml, .bl { left: 0; }
.tc, .bc { left: 50%; }
.tr, .mr, .br { left: 100%; }
.vbar { position: absolute; right: 6px; top: 100px; width: 4px; height: 994px; border-radius: 2px; background: #363738; }
.hbar { position: absolute; left: 96px; right: 180px; bottom: 6px; height: 4px; border-radius: 2px; background: #363738; }
.grip { position: absolute; width: 20px; height: 64px; background: #393b39; }
.grip::before { content: ""; width: 10px; height: 22px; border: solid #85868a; border-width: 0 2px; }
.gl { left: 0; top: 14px; border-radius: 0 16px 16px 0; }
.gr { right: 0; top: 80px; border-radius: 16px 0 0 16px; }

/* right column */
.right { grid-column: 3; grid-row: 2 / -1; border-top: 4px solid #252627; background: #2d2e30; }
.aligns { display: flex; justify-content: space-between; align-items: center; height: 60px; padding: 0 33px 0 37px; }
.aligns svg { width: 28px; height: 28px; fill: #4c4c4c; }
.title { display: flex; align-items: center; height: 96px; padding-left: 29px; background: #383a39; }
.title svg { width: 16px; height: 24px; }
.title h2 { margin: 0 0 0 75px; font: inherit; color: #d6d8de; }
.title small { margin-left: 8px; font: 26px/40px "Noto Sans", sans-serif; color: #9a9b9c; }
.tabs { display: grid; grid-template-columns: repeat(3, 1fr); gap: 4px; height: 82px; background: #383a39; border-bottom: 4px solid #434446; }
.tabs button { background: #2d2e30; }
.tabs .on { background: #3558c4; }
.row { display: flex; align-items: center; }
.row svg { width: 24px; height: 24px; flex: none; }
.series { height: 92px; padding-left: 34px; }
.series svg, .sub svg { width: 20px; height: 20px; }
.series span { margin-left: 26px; }
.series button { margin-left: 192px; }
.item { height: 108px; padding: 0 30px 0 80px; }
.item > svg { width: 28px; height: 28px; }
.item span { flex: 1; margin-left: 24px; color: #c9cacb; }
.item button svg { width: 26px; height: 26px; stroke: #b4b5b5; }
.item .mv { margin-left: 26px; }
.item .mv svg { stroke: #7c7d7d; }
.f { fill: #7c7d7d; stroke: none; }
.fields { display: flex; flex-direction: column; color: #9d9e9e; }
.outer { padding: 16px 20px 16px 104px; gap: 26px; }
.inner { padding: 36px 20px 18px 152px; gap: 32px; border-bottom: 2px solid #434446; }
.field { display: flex; flex-direction: column; gap: 12px; }
.outer .field { gap: 17px; }
.field input, .color { width: 100%; height: 56px; background: #383a38; border: 2px solid #434446; border-radius: 4px; }
.field input { padding: 0 16px; color: #e9e9e9; font: 24px/40px Inter, "Noto Sans CJK SC", sans-serif; }
.field .num { padding-top: 8px; font-size: 28px; }
.color { display: flex; }
.color input { flex: 1; height: 52px; min-width: 0; border: 0; background: none; }
.color button { flex: none; width: 66px; border-left: 2px solid #434446; align-items: flex-start; padding-top: 6px; }
.color i { width: 32px; height: 32px; border-radius: 50%; }
.orange { background: #f08c38; }
.blue { background: #3164d8; }
.groups { margin-left: 80px; }
.sub { height: 94px; padding-left: 34px; border-top: 2px solid #434446; }
.sub span { margin-left: 26px; }
.check { display: flex; align-items: center; gap: 22px; height: 32px; margin-bottom: 8px; }
.check input { appearance: none; width: 32px; height: 32px; margin: 0; background: #3558c4; border-radius: 4px; display: grid; place-items: center; }
.check input::before { content: ""; width: 18px; height: 9px; margin-top: -6px; border: solid #fff; border-width: 0 0 4px 4px; transform: rotate(-45deg); }
```
